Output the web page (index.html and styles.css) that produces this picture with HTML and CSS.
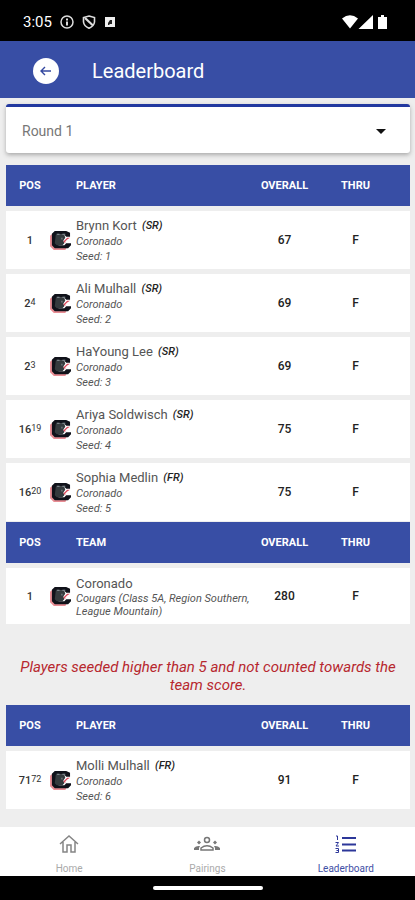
FILE: index.html
```html
<!DOCTYPE html>
<html lang="en">
<head>
<meta charset="UTF-8">
<meta name="viewport" content="width=device-width, initial-scale=1">
<title>Leaderboard</title>
<link rel="stylesheet" href="styles.css">
</head>
<body>

<!-- team logo, used in every row -->
<svg width="0" height="0" class="defs">
    <symbol id="cougar" viewBox="0 0 22 22">
        <path d="M4 3 L0 6 V17 L4 21 H16 L18 18 H7 L4 15z" fill="#e88d94"/>
        <path d="M5 1 H17 L21 3 V7 H17 L15 5 H8 L7 7 V14 L9 16 H15 L17 14 H22 V16 L19 19 H5 L2 16 V4z" fill="#10121a"/>
        <path d="M6 5 H15 L16 8 L14 11 L15 14 L13 16 H7 L5 14z" fill="#343a3d"/>
        <path d="M7 4h3v1H7zM13 4h3v1h-3zM12 8h1v2h-1z" fill="#8b969b"/>
        <path d="M18 8 H21 L18 10 L16 12 V14 L14 12z" fill="#d9485a"/>
    </symbol>
</svg>

<div class="statusbar">
    <span class="clock">3:05</span>
    <svg width="14" height="14" viewBox="0 0 14 14"><circle cx="7" cy="7" r="6" fill="none" stroke="#ddd" stroke-width="1.5"/><path d="M6 3.5h2v2H6zM6 6.5h2v4H6z" fill="#ddd"/></svg>
    <svg width="14" height="14" viewBox="0 0 14 14"><path d="M7 1 L12.5 2.5 V7 Q12 11 7 13.3 Q2 11 1.5 7 V2.5z" fill="none" stroke="#ddd" stroke-width="1.6"/><path d="M3 3 L11 10.5" stroke="#ddd" stroke-width="2.2"/></svg>
    <svg width="12" height="12" viewBox="0 0 12 12"><path d="M1 1h10v10H1z" fill="#eee"/><path d="M4 9V7l2-3h2v4H6L5 9z" fill="#222"/></svg>
    <svg class="signals" width="46" height="14" viewBox="0 0 46 14"><path d="M0 3.5 Q8 -3 16 3.5 L8 13.5z M31 0 V14 H16.5z M36 2h3V0h3v2h3v12h-9z" fill="#fff"/></svg>
</div>

<header class="appbar">
    <button class="back" aria-label="Back">
        <svg width="14" height="14" viewBox="0 0 14 14"><path d="M12 7 H2 M6 3 L2 7 L6 11" fill="none" stroke="#3448a0" stroke-width="1.4"/></svg>
    </button>
    <h1>Leaderboard</h1>
</header>

<main>
    <div class="round">
        <select aria-label="Round">
            <option>Round 1</option>
        </select>
        <svg class="caret" width="10" height="5" viewBox="0 0 10 5"><path d="M0 0h10L5 5z" fill="#111"/></svg>
    </div>

    <table>
        <thead>
            <tr><th class="pos">POS</th><th class="name">PLAYER</th><th class="overall">OVERALL</th><th class="thru">THRU</th></tr>
        </thead>
        <tbody>
            <tr>
                <td class="pos">1</td>
                <td><div class="entry"><svg class="logo"><use href="#cougar"/></svg><div><p>Brynn Kort <b>(SR)</b></p><i>Coronado</i><i>Seed: 1</i></div></div></td>
                <td class="overall">67</td>
                <td class="thru">F</td>
            </tr>
            <tr>
                <td class="pos">2<sup>4</sup></td>
                <td><div class="entry"><svg class="logo"><use href="#cougar"/></svg><div><p>Ali Mulhall <b>(SR)</b></p><i>Coronado</i><i>Seed: 2</i></div></div></td>
                <td class="overall">69</td>
                <td class="thru">F</td>
            </tr>
            <tr>
                <td class="pos">2<sup>3</sup></td>
                <td><div class="entry"><svg class="logo"><use href="#cougar"/></svg><div><p>HaYoung Lee <b>(SR)</b></p><i>Coronado</i><i>Seed: 3</i></div></div></td>
                <td class="overall">69</td>
                <td class="thru">F</td>
            </tr>
            <tr>
                <td class="pos">16<sup>19</sup></td>
                <td><div class="entry"><svg class="logo"><use href="#cougar"/></svg><div><p>Ariya Soldwisch <b>(SR)</b></p><i>Coronado</i><i>Seed: 4</i></div></div></td>
                <td class="overall">75</td>
                <td class="thru">F</td>
            </tr>
            <tr>
                <td class="pos">16<sup>20</sup></td>
                <td><div class="entry"><svg class="logo"><use href="#cougar"/></svg><div><p>Sophia Medlin <b>(FR)</b></p><i>Coronado</i><i>Seed: 5</i></div></div></td>
                <td class="overall">75</td>
                <td class="thru">F</td>
            </tr>
        </tbody>
    </table>

    <table class="team">
        <thead>
            <tr><th class="pos">POS</th><th class="name">TEAM</th><th class="overall">OVERALL</th><th class="thru">THRU</th></tr>
        </thead>
        <tbody>
            <tr>
                <td class="pos">1</td>
                <td><div class="entry"><svg class="logo"><use href="#cougar"/></svg><div><p>Coronado</p><i>Cougars (Class 5A, Region Southern, League Mountain)</i></div></div></td>
                <td class="overall">280</td>
                <td class="thru">F</td>
            </tr>
        </tbody>
    </table>

    <p class="note">Players seeded higher than 5 and not counted towards the team score.</p>

    <table>
        <thead>
            <tr><th class="pos">POS</th><th class="name">PLAYER</th><th class="overall">OVERALL</th><th class="thru">THRU</th></tr>
        </thead>
        <tbody>
            <tr>
                <td class="pos">71<sup>72</sup></td>
                <td><div class="entry"><svg class="logo"><use href="#cougar"/></svg><div><p>Molli Mulhall <b>(FR)</b></p><i>Coronado</i><i>Seed: 6</i></div></div></td>
                <td class="overall">91</td>
                <td class="thru">F</td>
            </tr>
        </tbody>
    </table>
</main>

<nav class="tabs">
    <a href="#home">
        <svg width="20" height="20" viewBox="0 0 20 20"><path d="M1 10 L10 2 L19 10 M4 8 V18 H8 V11 H12 V18 H16 V8" fill="none" stroke="#858585" stroke-width="1.5"/></svg>
        Home
    </a>
    <a href="#pairings">
        <svg width="26" height="20" viewBox="0 0 26 20"><g fill="none" stroke="#777" stroke-width="1.5"><circle cx="13" cy="6" r="2.5"/><path d="M7 16 V14 Q13 9.5 19 14 V16z"/></g><path d="M3 8.5 L5 6.5 L7 8.5 L5 10.5z M19 8.5 L21 6.5 L23 8.5 L21 10.5z M0 16 V14 Q2 11.5 6 12 L5 14 V16z M26 16 V14 Q24 11.5 20 12 L21 14 V16z" fill="#777"/></svg>
        Pairings
    </a>
    <a href="#leaderboard" class="active">
        <svg width="22" height="20" viewBox="0 0 22 20"><path d="M7 4H21M7 10.5H21M7 16.5H21" stroke="#2c3799" stroke-width="2.2"/><path d="M1 2H2.5V6M0.5 8.5H3.5L1 12H4M0.5 14.5H3.5V18.5H0.5M1.5 16.5H3.5" fill="none" stroke="#2c3799"/></svg>
        Leaderboard
    </a>
</nav>

<div class="gesture"><span></span></div>

</body>
</html>
```

FILE: styles.css
```css
* {
box-sizing: border-box;
}

body {
margin: 0;
min-height: 100vh;
display: flex;
flex-direction: column;
background-color: #eee;
color: #555;
font-family: Roboto, "Liberation Sans", sans-serif;
}

.defs {
position: absolute;
}

/* phone status bar */
.statusbar {
display: flex;
align-items: center;
gap: 8px;
height: 41px;
padding: 2px 27px 0 23px;
background-color: #000;
color: #fff;
}

.clock {
font-size: 15px;
}

.signals {
margin-left: auto;
}

.appbar {
display: flex;
align-items: center;
gap: 33px;
height: 57px;
padding: 2px 33px 0;
background-color: #384ea5;
color: #fff;
}

.appbar h1 {
margin: 0;
font-size: 20px;
font-weight: 400;
}

.back {
display: flex;
align-items: center;
justify-content: center;
width: 26px;
height: 26px;
padding: 0;
border: none;
border-radius: 50%;
background-color: #fff;
cursor: pointer;
}

main {
flex: 1;
padding: 6px 5px 18px 6px;
}

/* round picker */
.round {
position: relative;
margin-bottom: 12px;
}

.round select {
display: block;
width: 100%;
height: 49px;
padding: 1px 16px 0;
border: none;
border-top: 3px solid #2339a0;
border-radius: 3px;
background-color: #fff;
box-shadow: 0 2px 4px #aaa;
color: #777;
font-family: inherit;
font-size: 14px;
appearance: none;
}

.caret {
position: absolute;
right: 24px;
top: 25px;
pointer-events: none;
}

table {
width: 100%;
border-spacing: 0;
table-layout: fixed;
}

.team {
margin-top: 1px;
}

th {
height: 41px;
padding: 0;
background-color: #384ea5;
color: #fff;
font-size: 11px;
font-weight: 700;
}

td {
height: 63px;
padding: 0;
border-top: 5px solid #eee;
background-color: #fff;
}

.team td {
height: 61px;
}

.pos {
width: 44px;
padding-left: 4px;
text-align: center;
}

th.name {
padding-left: 26px;
text-align: left;
}

.overall {
width: 65px;
text-align: center;
}

.thru {
width: 93px;
padding-right: 16px;
text-align: center;
}

td.pos {
color: #333;
font-size: 11px;
font-weight: 500;
}

td.overall,
td.thru {
color: #222;
font-size: 12px;
font-weight: 500;
}

sup {
font-size: 9px;
font-weight: 400;
line-height: 1;
vertical-align: 2px;
}

.entry {
display: flex;
align-items: center;
gap: 5px;
}

.logo {
flex: none;
width: 21px;
height: 21px;
}

.entry p {
margin: 0;
font-size: 13px;
line-height: 17px;
}

.entry b {
margin-left: 2px;
color: #222;
font-size: 11px;
font-style: italic;
font-weight: 500;
vertical-align: 1px;
}

.entry i {
display: block;
font-size: 11px;
line-height: 15px;
}

.team i {
line-height: 13px;
}

.note {
margin: 34px 12px 11px;
color: #b7282e;
font-size: 15px;
font-style: italic;
line-height: 18px;
text-align: center;
}

/* bottom navigation */
.tabs {
display: flex;
height: 49px;
padding-top: 7px;
background-color: #fff;
}

.tabs a {
flex: 1;
display: flex;
flex-direction: column;
align-items: center;
gap: 9px;
color: #aaa;
font-size: 10px;
line-height: 12px;
text-decoration: none;
}

.tabs .active {
color: #3f4fa5;
}

.gesture {
display: flex;
align-items: center;
justify-content: center;
height: 24px;
background-color: #000;
}

.gesture span {
width: 110px;
height: 4px;
border-radius: 2px;
background-color: #fff;
}
```
